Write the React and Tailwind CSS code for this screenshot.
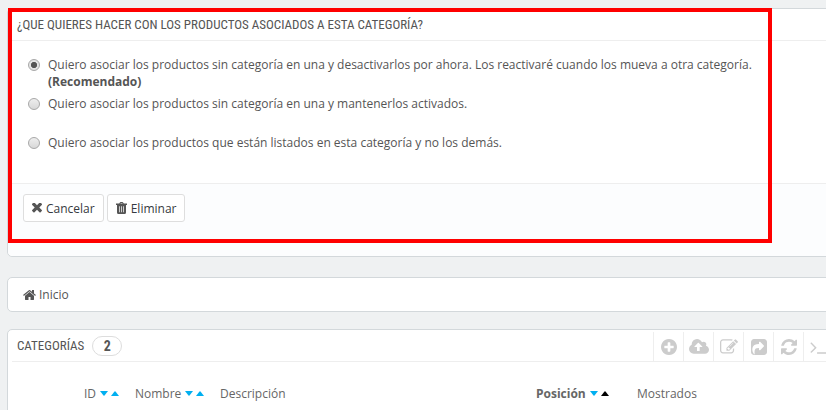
import React from "react";

const icons = {
  plus: {
    box: "128 128 1536 1536",
    d: "M1344 960v-128q0-26-19-45t-45-19h-256v-256q0-26-19-45t-45-19h-128q-26 0-45 19t-19 45v256h-256q-26 0-45 19t-19 45v128q0 26 19 45t45 19h256v256q0 26 19 45t45 19h128q26 0 45-19t19-45v-256h256q26 0 45-19t19-45zm320-64q0 209-103 385.5t-279.5 279.5-385.5 103-385.5-103-279.5-279.5-103-385.5 103-385.5 279.5-279.5 385.5-103 385.5 103 279.5 279.5 103 385.5z",
  },
  upload: {
    box: "-64 128 1920 1536",
    d: "M1216 864q0-14-9-23l-352-352q-9-9-23-9t-23 9l-351 351q-10 12-10 24 0 14 9 23t23 9h224v352q0 13 9.5 22.5t22.5 9.5h192q13 0 22.5-9.5t9.5-22.5v-352h224q13 0 22.5-9.5t9.5-22.5zm640 288q0 159-112.5 271.5t-271.5 112.5h-1088q-185 0-316.5-131.5t-131.5-316.5q0-130 70-240t188-165q-2-30-2-43 0-212 150-362t362-150q156 0 285.5 87t188.5 231q71-62 166-62 106 0 181 75t75 181q0 76-41 138 130 31 213.5 135.5t83.5 238.5z",
  },
  edit: {
    box: "0 128 1792 1536",
    d: "M888 1184l116-116-152-152-116 116v56h96v96h56zm440-720q-16-16-33 1l-350 350q-17 17-1 33t33-1l350-350q17-17 1-33zm80 594v190q0 119-84.5 203.5t-203.5 84.5h-832q-119 0-203.5-84.5t-84.5-203.5v-832q0-119 84.5-203.5t203.5-84.5h832q63 0 117 25 15 7 18 23 3 17-9 29l-49 49q-14 14-32 8-23-6-45-6h-832q-66 0-113 47t-47 113v832q0 66 47 113t113 47h832q66 0 113-47t47-113v-126q0-13 9-22l64-64q15-15 35-7t20 29zm-96-738l288 288-672 672h-288v-288zm444 132l-92 92-288-288 92-92q28-28 68-28t68 28l152 152q28 28 28 68t-28 68z",
  },
  share: {
    box: "128 128 1536 1536",
    d: "M1005 1197l352-352q19-19 19-45t-19-45l-352-352q-30-31-69-14-40 17-40 59v160q-119 0-216 19.5t-162.5 51-114 79-76.5 95.5-44.5 109-21.5 111.5-5 110.5q0 181 167 404 11 12 25 12 7 0 13-3 22-9 19-33-44-354 62-473 46-52 130-75.5t224-23.5v160q0 42 40 59 12 5 24 5 26 0 45-19zm659-781v960q0 119-84.5 203.5t-203.5 84.5h-960q-119 0-203.5-84.5t-84.5-203.5v-960q0-119 84.5-203.5t203.5-84.5h960q119 0 203.5 84.5t84.5 203.5z",
  },
  refresh: {
    box: "128 128 1536 1536",
    d: "M1639 1056q0 5-1 7-64 268-268 434.5t-478 166.5q-146 0-282.5-55t-243.5-157l-129 129q-19 19-45 19t-45-19-19-45v-448q0-26 19-45t45-19h448q26 0 45 19t19 45-19 45l-137 137q71 66 161 102t187 36q134 0 250-65t186-179q11-17 53-117 8-23 30-23h192q13 0 22.5 9.5t9.5 22.5zm25-800v448q0 26-19 45t-45 19h-448q-26 0-45-19t-19-45 19-45l138-138q-148-137-349-137-134 0-250 65t-186 179q-11 17-53 117-8 23-30 23h-199q-13 0-22.5-9.5t-9.5-22.5v-7q65-268 270-434.5t480-166.5q146 0 284 55.5t245 156.5l130-129q19-19 45-19t45 19 19 45z",
  },
  terminal: {
    box: "64 128 1664 1536",
    d: "M649 983l-466 466q-10 10-23 10t-23-10l-50-50q-10-10-10-23t10-23l393-393-393-393q-10-10-10-23t10-23l50-50q10-10 23-10t23 10l466 466q10 10 10 23t-10 23zm1079 457v64q0 14-9 23t-23 9h-960q-14 0-23-9t-9-23v-64q0-14 9-23t23-9h960q14 0 23 9t9 23z",
  },
  close: {
    box: "302 434 1188 1188",
    d: "M1490 1322q0 40-28 68l-136 136q-28 28-68 28t-68-28l-294-294-294 294q-28 28-68 28t-68-28l-136-136q-28-28-28-68t28-68l294-294-294-294q-28-28-28-68t28-68l136-136q28-28 68-28t68 28l294 294 294-294q28-28 68-28t68 28l136 136q28 28 28 68t-28 68l-294 294 294 294q28 28 28 68z",
  },
  // wide lid, solid bin with three thin slots
  trash: {
    box: "0 0 11 12",
    d: "M3.2 1.6L3.9.4Q4.1 0 4.6 0h1.8q.5 0 .7.4l.7 1.2H11v1.3h-1v7.6Q10 12 8.6 12H2.4Q1 12 1 10.500V2.900H0V1.600zM4.400 1.600h2.200L6.300.9H4.700zM3 4.200v6h.7v-6zM5.150 4.200v6h.7v-6zM7.300 4.200v6h.7v-6z",
  },
  home: {
    box: "64 253 1664 1283",
    d: "M1472 992v480q0 26-19 45t-45 19h-384v-384h-256v384h-384q-26 0-45-19t-19-45v-480q0-1 .5-3t.5-3l575-474 575 474q1 2 1 6zm223-69l-62 74q-8 9-21 11h-3q-13 0-21-7l-692-577-692 577q-12 8-24 7-13-2-21-11l-62-74q-8-10-7-23.5t11-21.5l719-599q32-26 76-26t76 26l244 204v-195q0-14 9-23t23-9h192q14 0 23 9t9 23v408l219 182q10 8 11 21.5t-7 23.5z",
  },
};

const Icon = ({ name, className }) => (
  <svg
    viewBox={icons[name].box}
    fill="currentColor"
    fillRule="evenodd"
    aria-hidden="true"
    className={className}
  >
    <path d={icons[name].d} />
  </svg>
);

const options = [
  {
    id: "disable",
    text: "Quiero asociar los productos sin categoría en una y desactivarlos por ahora. Los reactivaré cuando los mueva a otra categoría.",
    note: "(Recomendado)",
  },
  {
    id: "keep",
    text: "Quiero asociar los productos sin categoría en una y mantenerlos activados.",
  },
  {
    id: "delete",
    text: "Quiero asociar los productos que están listados en esta categoría y no los demás.",
  },
];

const tools = [
  { icon: "plus", label: "Añadir", size: "h-4 w-4" },
  { icon: "upload", label: "Importar", size: "h-4 w-5" },
  { icon: "edit", label: "Editar", size: "h-4 w-[18px]" },
  { icon: "share", label: "Exportar", size: "h-4 w-4" },
  { icon: "refresh", label: "Actualizar", size: "h-4 w-4" },
  { icon: "terminal", label: "Consulta SQL", size: "h-4 w-[18px]" },
];

const columns = [
  { name: "ID", sort: true, width: "w-[51px]" },
  { name: "Nombre", sort: true, width: "w-[85px]" },
  { name: "Descripción", width: "" },
  { name: "Posición", sort: true, active: true, width: "w-[101px]" },
  { name: "Mostrados", width: "w-[196px]" },
];

const panel = "rounded-[5px] border border-[#d3d8db] bg-white";
const condensed = "font-['Ubuntu_Condensed','Roboto_Condensed','Open_Sans',sans-serif]";
const title = `${condensed} text-[13px] font-normal uppercase`;
const button =
  "flex h-7 items-center gap-1 rounded-[3px] border border-[#dedede] bg-white px-2 text-[#363a41]";

const SortArrows = ({ active }) => (
  <span className="flex gap-[3px]">
    <button type="button" aria-label="Descendente" className="text-[#00aff0]">
      <svg viewBox="0 0 8 5" fill="currentColor" className="h-[5px] w-2">
        <path d="M0 0h8L4.5 4.5q-.5.5-1 0z" />
      </svg>
    </button>
    <button
      type="button"
      aria-label="Ascendente"
      className={active ? "text-black" : "text-[#00aff0]"}
    >
      <svg viewBox="0 0 8 5" fill="currentColor" className="h-[5px] w-2">
        <path d="M0 5h8L4.5.5q-.5-.5-1 0z" />
      </svg>
    </button>
  </span>
);

const DeleteModePanel = () => (
  <form className={`relative ${panel}`}>
    <h3 className={`ml-1 flex h-8 items-center border-b border-[#eeeeee] pl-[5px] ${title}`}>
      ¿Que quieres hacer con los productos asociados a esta categoría?
    </h3>
    <div className="flex flex-col gap-[5px] px-5 py-[15px]">
      {options.map((option, i) => (
        <label key={option.id} className="flex min-h-[34px] items-start gap-2">
          <input
            type="radio"
            name="deleteMode"
            value={option.id}
            defaultChecked={i === 0}
            className="mt-[3px] h-3 w-3 shrink-0 appearance-none rounded-full border border-[#a8a8a8] bg-linear-to-b from-[#eeeeee] to-[#d8d8d8] checked:bg-radial checked:from-[#555555] checked:from-40% checked:to-[#e4e4e4] checked:to-45%"
          />
          <span>
            {option.text}
            {option.note && <strong className="block">{option.note}</strong>}
          </span>
        </label>
      ))}
    </div>
    <div className="flex h-[73px] items-start gap-[3px] rounded-b-[5px] border-t border-[#eeeeee] bg-[#fcfdfe] px-[15px] pt-[10px]">
      <button type="button" className={button}>
        <Icon name="close" className="h-[10px] w-[10px] text-[#555555]" />
        Cancelar
      </button>
      <button type="submit" className={button}>
        <Icon name="trash" className="h-3 w-[11px] text-[#555555]" />
        Eliminar
      </button>
    </div>
    {/* red highlight around the question */}
    <div className="pointer-events-none absolute -top-px right-[61px] left-0 h-[235px] border-4 border-[#ff0000]" />
  </form>
);

const CategoriesPanel = () => (
  <section className={`h-28 ${panel}`}>
    <div className="ml-1 flex h-8 items-center border-b border-[#eeeeee] pl-[5px]">
      <h3 className={title}>Categorías</h3>
      <span
        className={`ml-2 flex h-5 w-[30px] items-center justify-center rounded-full border border-[#dddddd] text-sm font-bold ${condensed}`}
      >
        2
      </span>
      <div className="ml-auto flex self-end">
        {tools.map((tool) => (
          <button
            key={tool.icon}
            type="button"
            aria-label={tool.label}
            className="flex h-[29px] w-[30px] items-center justify-center border-l border-[#eeeeee] text-[#cccccc]"
          >
            <Icon name={tool.icon} className={tool.size} />
          </button>
        ))}
      </div>
    </div>
    <table className="mt-[23px] w-full table-fixed text-left text-[#666666]">
      <thead>
        <tr>
          <td className="w-[76px]" />
          {columns.map((col) => (
            <th key={col.name} className={`p-0 font-normal ${col.width}`}>
              <span className={`flex items-center gap-1 ${col.active ? "font-bold" : ""}`}>
                {col.name}
                {col.sort && <SortArrows active={col.active} />}
              </span>
            </th>
          ))}
        </tr>
      </thead>
    </table>
  </section>
);

const App = () => {
  return (
    <div className="h-screen overflow-hidden bg-[#eff1f2] pt-2 pl-[7px] font-['Open_Sans',sans-serif] text-xs leading-[17px] text-[#555555]">
      {/* the panels run on past the right edge */}
      <main className="-mr-2 flex flex-col">
        <DeleteModePanel />
        <nav className={`mt-5 flex h-[35px] items-center px-[15px] ${panel}`}>
          <a href="#" className="flex items-center gap-[3px]">
            <Icon name="home" className="h-[10px] w-[13px]" />
            Inicio
          </a>
        </nav>
        <div className="mt-[17px]">
          <CategoriesPanel />
        </div>
      </main>
    </div>
  );
};

export default App;
